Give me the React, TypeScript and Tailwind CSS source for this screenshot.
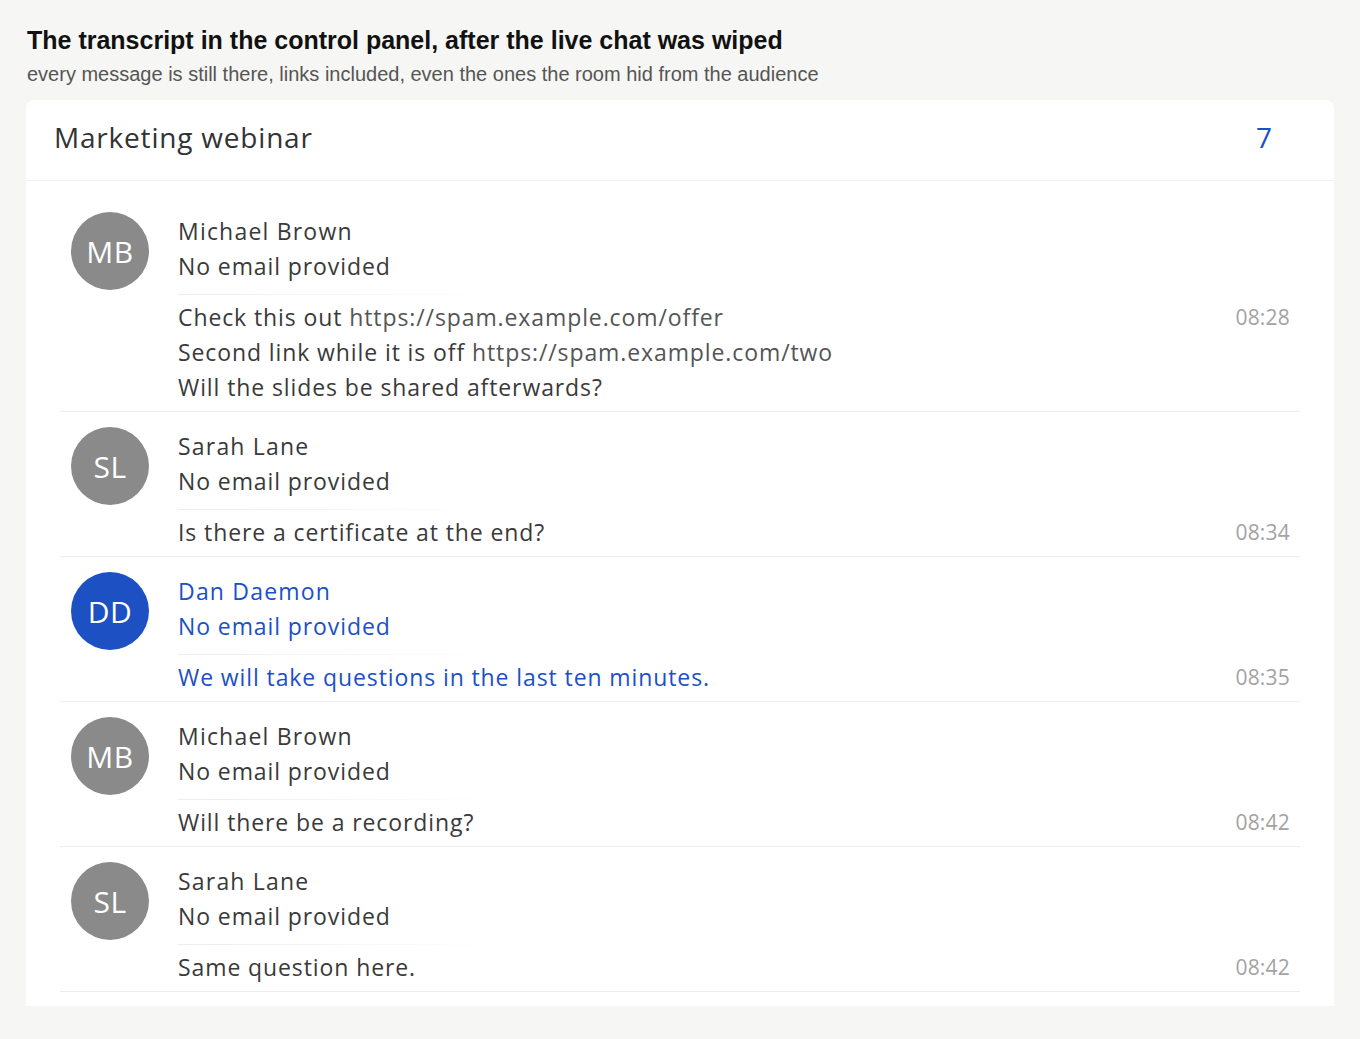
import React from "react";

type Msg = {
  initials: string;
  name: string;
  time: string;
  lines: React.ReactNode[];
  host?: boolean;
};

const messages: Msg[] = [
  {
    initials: "MB",
    name: "Michael Brown",
    time: "08:28",
    lines: [
      <>Check this out <span className="text-[#555]">https://spam.example.com/offer</span></>,
      <>Second link while it is off <span className="text-[#555]">https://spam.example.com/two</span></>,
      "Will the slides be shared afterwards?",
    ],
  },
  { initials: "SL", name: "Sarah Lane", time: "08:34", lines: ["Is there a certificate at the end?"] },
  {
    initials: "DD",
    name: "Dan Daemon",
    time: "08:35",
    host: true,
    lines: ["We will take questions in the last ten minutes."],
  },
  { initials: "MB", name: "Michael Brown", time: "08:42", lines: ["Will there be a recording?"] },
  { initials: "SL", name: "Sarah Lane", time: "08:42", lines: ["Same question here."] },
];

function Row({ m }: { m: Msg }) {
  const tone = m.host ? "text-[#1c50c6]" : "text-[#3a3a3a]";
  return (
    <div className="flex items-start border-b border-[#eeeeee] pt-[15px] pb-[6px] pl-[11px] pr-[10px]">
      <div
        className={`w-[78px] h-[78px] rounded-full shrink-0 flex items-center justify-center text-white text-[30px] tracking-[0.5px] ${
          m.host ? "bg-[#1d50c3]" : "bg-[#8a8a8a]"
        }`}
      >
        {m.initials}
      </div>
      <div className={`flex-1 ml-[29px] pt-[2px] text-[23px] tracking-[0.9px] leading-[35px] ${tone}`}>
        <div className="tracking-[1.2px]">{m.name}</div>
        <div>No email provided</div>
        <div className="h-px w-[320px] mt-[10px] mb-[5px] bg-gradient-to-r from-[#ececec] to-transparent" />
        <div className="flex items-start">
          <div className="flex-1">
            {m.lines.map((l, i) => (
              <div key={i}>{l}</div>
            ))}
          </div>
          <div className="text-[21px] tracking-[0.2px] text-[#a3a3a3]">{m.time}</div>
        </div>
      </div>
    </div>
  );
}

export default function App() {
  return (
    <div className="min-h-[1039px] bg-[#f6f6f4] px-[26px] pt-[25px] pb-[34px]">
      <div className="font-['Liberation_Sans',Arial,sans-serif] pl-px">
        <h1 className="text-[25px] font-bold text-[#111] leading-[30px]">
          The transcript in the control panel, after the live chat was wiped
        </h1>
        <p className="text-[20px] text-[#555] leading-[28px] mt-[5px]">
          every message is still there, links included, even the ones the room hid from the audience
        </p>
      </div>
      <div className="mt-[12px] bg-white rounded-t-[8px] font-['Open_Sans',sans-serif]">
        <div className="h-[81px] flex items-center justify-between pl-[28px] pr-[62px] pb-[6px] border-b border-[#f0f0f0]">
          <span className="text-[28px] tracking-[0.8px] text-[#333]">Marketing webinar</span>
          <span className="text-[28px] text-[#1c50c6]">7</span>
        </div>
        <div className="px-[34px] pt-[16px] pb-[14px]">
          {messages.map((m, i) => (
            <Row key={i} m={m} />
          ))}
        </div>
      </div>
    </div>
  );
}
